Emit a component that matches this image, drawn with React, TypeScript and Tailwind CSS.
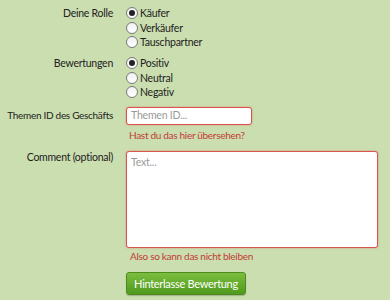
import React from "react";

function Radio({ label, checked }: { label: string; checked?: boolean }) {
  return (
    <label className="flex items-center h-[14.5px] gap-[2px]">
      <span className="w-[12px] h-[12px] rounded-full border border-[#7a7a7a] bg-gradient-to-b from-[#f0f0f0] to-white flex items-center justify-center shrink-0">
        {checked && <span className="w-[6px] h-[6px] rounded-full bg-[#222]" />}
      </span>
      <span className="text-[10.5px] tracking-[-0.25px] text-[#222] leading-none whitespace-nowrap">{label}</span>
    </label>
  );
}

export default function App() {
  return (
    <div
      className="w-[390px] h-[300px] bg-[#cbdeb0] overflow-hidden"
      style={{ fontFamily: "Lato, 'Open Sans', sans-serif" }}
    >
      <div className="grid grid-cols-[113px_1fr] gap-x-[13px] pt-[6px]">
        <div className="text-right text-[10.5px] tracking-[-0.25px] text-[#222] leading-[14.5px] whitespace-nowrap">Deine Rolle</div>
        <div className="flex flex-col">
          <Radio label="Käufer" checked />
          <Radio label="Verkäufer" />
          <Radio label="Tauschpartner" />
        </div>

        <div className="text-right text-[10.5px] tracking-[-0.25px] text-[#222] leading-[14.5px] mt-[6.5px] whitespace-nowrap">Bewertungen</div>
        <div className="flex flex-col mt-[6.5px]">
          <Radio label="Positiv" checked />
          <Radio label="Neutral" />
          <Radio label="Negativ" />
        </div>

        <div className="text-right text-[10px] tracking-[-0.3px] text-[#222] leading-[14.5px] mt-[8px] whitespace-nowrap">Themen ID des Geschäfts</div>
        <div className="mt-[7px] flex flex-col">
          <div className="w-[126px] h-[18px] rounded-[3px] border border-[#d9534f] bg-white shadow-[0_0_2px_rgba(217,83,79,0.6)] flex items-center px-[4px]">
            <span className="text-[10.5px] tracking-[-0.2px] text-[#9a9a9a] leading-none whitespace-nowrap">Themen ID...</span>
          </div>
          <div className="text-[10px] tracking-[-0.3px] text-[#c23b36] leading-none mt-[5px] ml-[3px] whitespace-nowrap">Hast du das hier übersehen?</div>
        </div>

        <div className="text-right text-[10.5px] tracking-[-0.25px] text-[#222] leading-[14.5px] mt-[10px] whitespace-nowrap">Comment (optional)</div>
        <div className="mt-[11px] flex flex-col">
          <div className="w-[252px] h-[97px] rounded-[3px] border border-[#d9534f] bg-white shadow-[0_0_2px_rgba(217,83,79,0.6)] px-[4px] pt-[5px]">
            <span className="text-[10.5px] tracking-[-0.2px] text-[#9a9a9a] leading-none block">Text...</span>
          </div>
          <div className="text-[10px] tracking-[-0.3px] text-[#c23b36] leading-none mt-[3px] ml-[4px] whitespace-nowrap">Also so kann das nicht bleiben</div>
        </div>

        <div />
        <div className="mt-[9px]">
          <button className="h-[23px] w-[120px] rounded-[3px] border border-[#4f8a1e] bg-gradient-to-b from-[#7cbd3e] to-[#4f9a1c] text-white text-[11px] tracking-[-0.3px] leading-none whitespace-nowrap shadow-[0_1px_1px_rgba(0,0,0,0.2)]">
            Hinterlasse Bewertung
          </button>
        </div>
      </div>
    </div>
  );
}
